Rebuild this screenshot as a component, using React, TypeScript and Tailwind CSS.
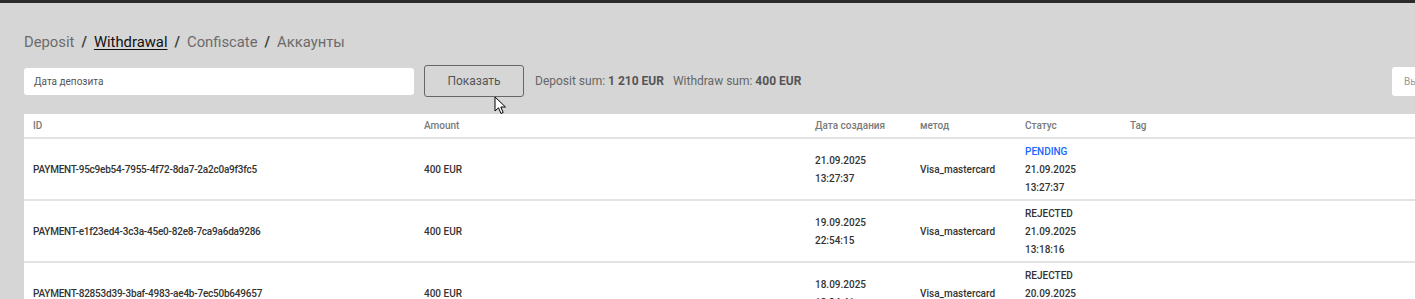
import React from "react";

type Row = {
  id: string;
  amount: string;
  date: string;
  time: string;
  method: string;
  status: string;
  statusDate: string;
  statusTime: string;
};

const rows: Row[] = [
  {
    id: "PAYMENT-95c9eb54-7955-4f72-8da7-2a2c0a9f3fc5",
    amount: "400 EUR",
    date: "21.09.2025",
    time: "13:27:37",
    method: "Visa_mastercard",
    status: "PENDING",
    statusDate: "21.09.2025",
    statusTime: "13:27:37",
  },
  {
    id: "PAYMENT-e1f23ed4-3c3a-45e0-82e8-7ca9a6da9286",
    amount: "400 EUR",
    date: "19.09.2025",
    time: "22:54:15",
    method: "Visa_mastercard",
    status: "REJECTED",
    statusDate: "21.09.2025",
    statusTime: "13:18:16",
  },
  {
    id: "PAYMENT-82853d39-3baf-4983-ae4b-7ec50b649657",
    amount: "400 EUR",
    date: "18.09.2025",
    time: "13:34:41",
    method: "Visa_mastercard",
    status: "REJECTED",
    statusDate: "20.09.2025",
    statusTime: "13:21:02",
  },
];

const Cursor = () => (
  <svg className="absolute left-[494px] top-[96px] z-10" width="14" height="20" viewBox="0 0 14 20">
    <path d="M1 1 L1 15 L4.5 11.8 L7 17.5 L9.2 16.5 L6.8 11 L11.5 11 Z" fill="#fff" stroke="#000" strokeWidth="1" strokeLinejoin="round" />
  </svg>
);

const App = () => {
  return (
    <div className="relative w-[1415px] h-[299px] overflow-hidden bg-[#d6d6d6] font-['Roboto','Liberation_Sans',sans-serif]">
      <div className="h-[3px] bg-[#2b2b2b]" />

      <div className="pl-6">
        {/* Breadcrumbs */}
        <div className="flex items-center gap-[7px] pt-[29px] text-[14.8px] leading-5 text-[#6b6b6b]">
          <span>Deposit</span>
          <span className="font-bold text-[#444]">/</span>
          <span className="text-[#111] underline underline-offset-2">Withdrawal</span>
          <span className="font-bold text-[#444]">/</span>
          <span>Confiscate</span>
          <span className="font-bold text-[#444]">/</span>
          <span>Аккаунты</span>
        </div>

        {/* Filters */}
        <div className="flex items-center mt-[13px] h-8">
          <div className="w-[390px] h-[27px] bg-white rounded-[3px] flex items-center pl-[10px] text-[10px] text-[#555]">
            Дата депозита
          </div>
          <button className="ml-[10px] w-[100px] h-8 border border-[#666] rounded-[3px] text-[12px] text-[#555]">
            Показать
          </button>
          <div className="ml-[11px] text-[12px] text-[#666]">
            Deposit sum: <span className="font-bold text-[#555]">1 210 EUR</span>
            <span className="ml-[9px]">Withdraw sum: </span>
            <span className="font-bold text-[#555]">400 EUR</span>
          </div>
          <div className="ml-auto w-[23px] h-[29px] bg-white rounded-l-[3px] flex items-center pl-[12px] text-[10px] text-[#999] shrink-0 overflow-hidden whitespace-nowrap">
            Выберите
          </div>
        </div>

        {/* Table */}
        <div className="mt-[17px] bg-white text-[10px] font-medium">
          <div className="flex h-[25px] items-center border-b-2 border-[#e3e3e3] text-[#7a7a7a]">
            <div className="w-[391px] pl-[9px]">ID</div>
            <div className="w-[391px] pl-[9px]">Amount</div>
            <div className="w-[105px] pl-[9px]">Дата создания</div>
            <div className="w-[105px] pl-[9px]">метод</div>
            <div className="w-[105px] pl-[9px]">Статус</div>
            <div className="w-[105px] pl-[9px]">Tag</div>
          </div>
          {rows.map((r) => (
            <div key={r.id} className="flex h-[62px] items-center pt-[1px] border-b-2 border-[#e3e3e3] text-[#333] leading-[18px]">
              <div className="w-[391px] pl-[9px] tracking-[-0.22px]">{r.id}</div>
              <div className="w-[391px] pl-[9px]">{r.amount}</div>
              <div className="w-[105px] pl-[9px]">
                <div>{r.date}</div>
                <div>{r.time}</div>
              </div>
              <div className="w-[105px] pl-[9px]">{r.method}</div>
              <div className="w-[105px] pl-[9px]">
                <div className={r.status === "PENDING" ? "text-[#1a66ff]" : ""}>{r.status}</div>
                <div>{r.statusDate}</div>
                <div>{r.statusTime}</div>
              </div>
              <div className="w-[105px] pl-[9px]" />
            </div>
          ))}
        </div>
      </div>

      <Cursor />
    </div>
  );
};

export default App;
